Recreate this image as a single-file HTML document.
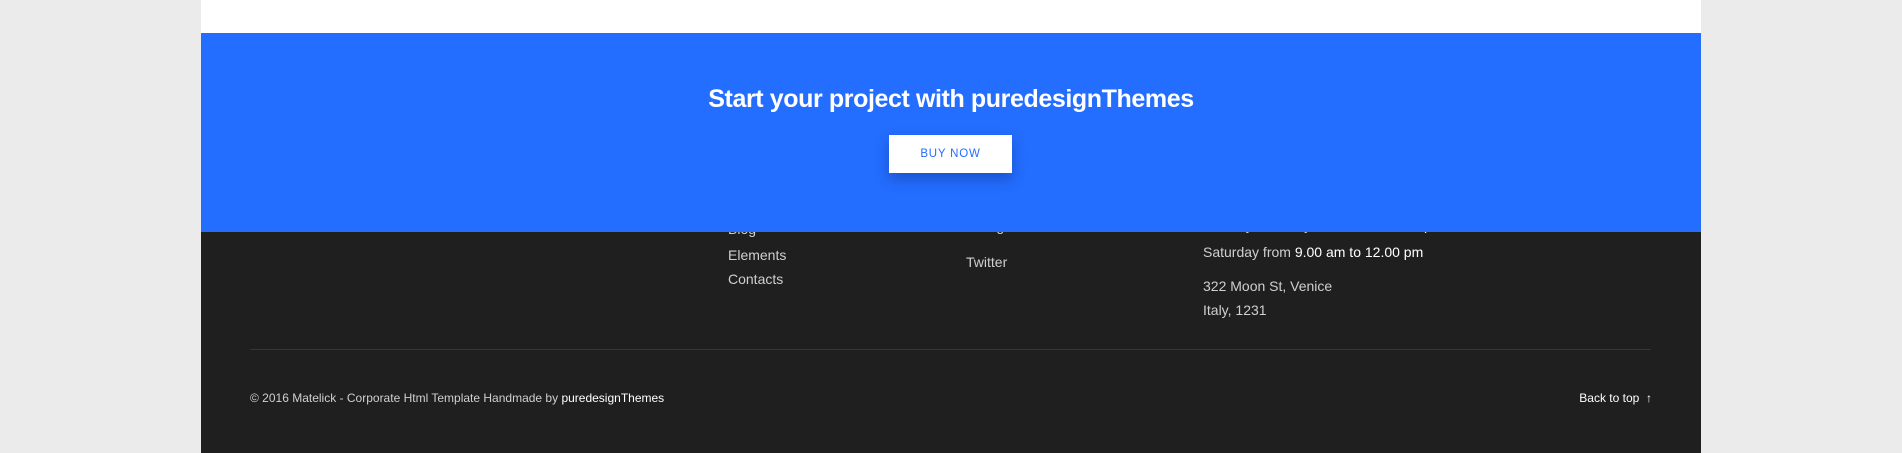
<!DOCTYPE html>
<html><head><meta charset="utf-8"><style>
*{margin:0;padding:0;box-sizing:border-box}
body{width:1902px;height:453px;background:#ebebeb;font-family:"Liberation Sans",sans-serif;position:relative;overflow:hidden}
.wrap{position:absolute;left:201px;width:1500px;top:0;height:453px;background:#1f1f1f;overflow:hidden}
.white{position:absolute;left:0;top:0;width:1500px;height:33px;background:#fff}
.t{position:absolute;color:#cfcfcf;font-size:14px;white-space:nowrap;line-height:18px}
.t b{color:#fff;font-weight:normal}
.blue{position:absolute;left:0;top:33px;width:1500px;height:199px;background:#236dff;z-index:2}
.h{position:absolute;left:0;width:1500px;top:52px;text-align:center;color:#fff;font-size:25px;font-weight:bold;letter-spacing:-0.4px}
.btn{position:absolute;left:688px;top:102px;width:123px;height:38px;background:#fff;color:#236dff;font-size:11.5px;letter-spacing:0.8px;text-align:center;line-height:38px;box-shadow:0 6px 14px rgba(0,0,40,0.25)}
.line{position:absolute;left:49px;width:1401px;top:349px;height:1px;background:#363636}
</style></head><body>
<div class="wrap">
<div class="white"></div>
<div class="blue"><div class="h">Start your project with puredesignThemes</div><div class="btn">BUY NOW</div></div>
<div class="t" style="left:527px;top:220px">Blog</div>
<div class="t" style="left:527px;top:246px">Elements</div>
<div class="t" style="left:527px;top:270px">Contacts</div>
<div class="t" style="left:765px;top:217px">Instagram</div>
<div class="t" style="left:765px;top:253px">Twitter</div>
<div class="t" style="left:1002px;top:216px">Monday to Friday <b>9.00 am to 18.00 pm</b></div>
<div class="t" style="left:1002px;top:243px">Saturday from <b>9.00 am to 12.00 pm</b></div>
<div class="t" style="left:1002px;top:277px">322 Moon St, Venice</div>
<div class="t" style="left:1002px;top:301px">Italy, 1231</div>
<div class="line"></div>
<div class="t" style="left:49px;top:389px;font-size:12px">© 2016 Matelick - Corporate Html Template Handmade by <b>puredesignThemes</b></div>
<div class="t" style="right:49px;top:389px;font-size:12px;color:#fff">Back to top&nbsp; <span style="font-weight:bold">↑</span></div>
</div>
</body></html>
